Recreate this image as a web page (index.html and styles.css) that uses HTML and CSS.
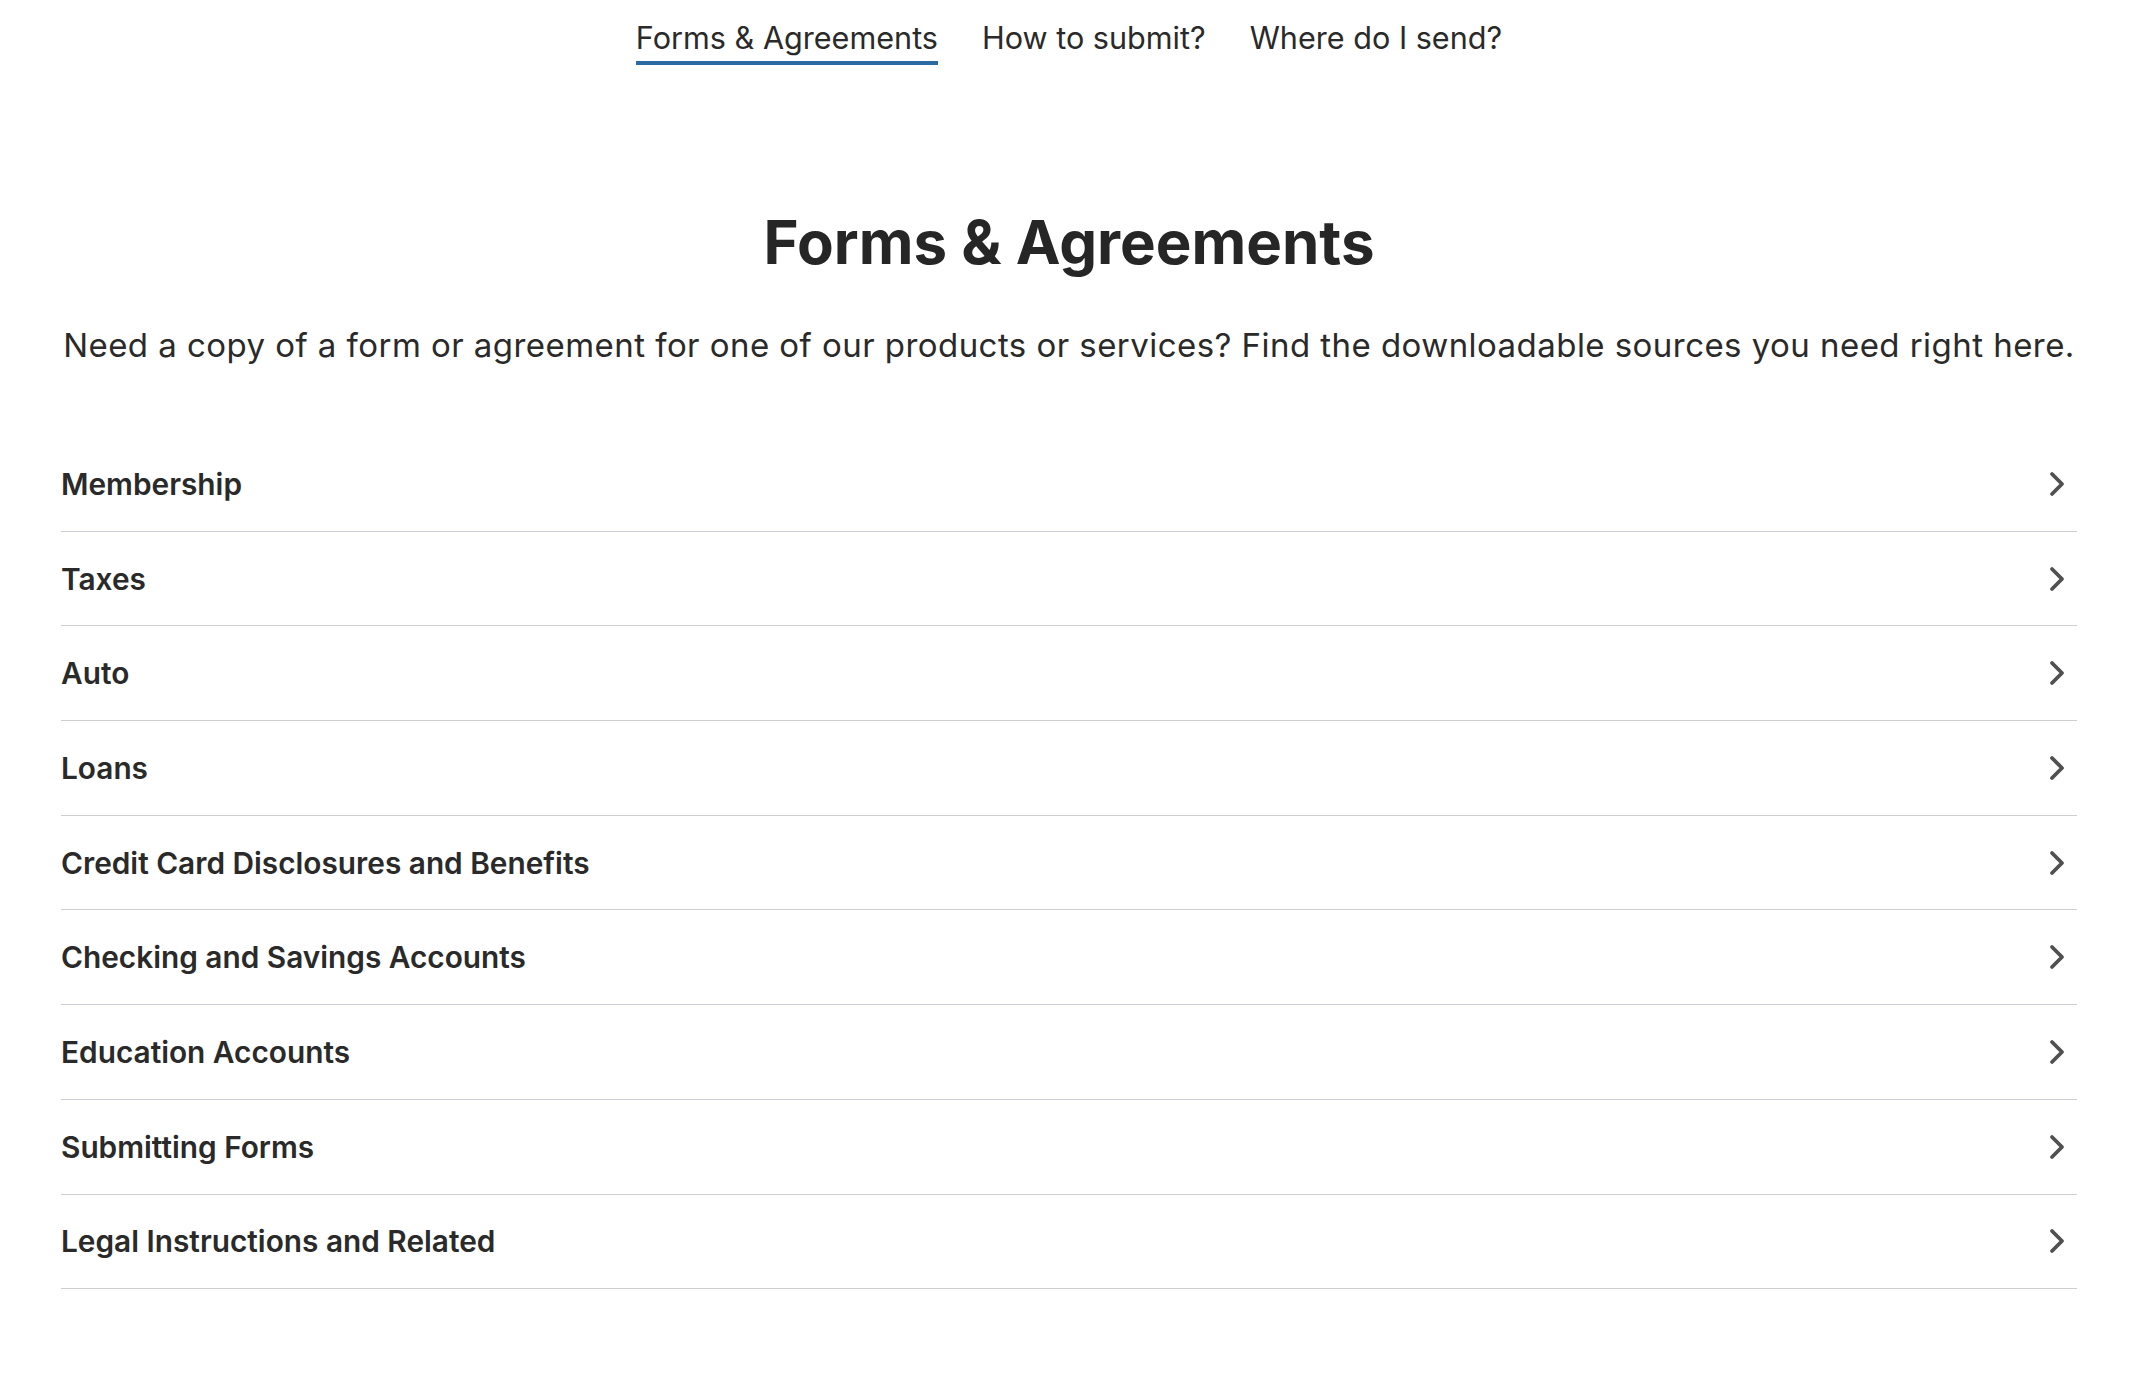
FILE: index.html
```html
<!DOCTYPE html>
<html lang="en">
<head>
<meta charset="utf-8">
<title>Forms &amp; Agreements</title>
<link rel="stylesheet" href="styles.css">
</head>
<body>
<div class="page">
  <nav class="tabs">
    <a class="tab active" href="#">Forms &amp; Agreements</a>
    <a class="tab" href="#">How to submit?</a>
    <a class="tab" href="#">Where do I send?</a>
  </nav>
  <h1 class="title">Forms &amp; Agreements</h1>
  <p class="intro">Need a copy of a form or agreement for one of our products or services? Find the downloadable sources you need right here.</p>
  <ul class="list">
    <li class="row"><span>Membership</span><svg class="chev" viewBox="0 0 16 26"><path d="M3 3 L13 13 L3 23"/></svg></li>
    <li class="row"><span>Taxes</span><svg class="chev" viewBox="0 0 16 26"><path d="M3 3 L13 13 L3 23"/></svg></li>
    <li class="row"><span>Auto</span><svg class="chev" viewBox="0 0 16 26"><path d="M3 3 L13 13 L3 23"/></svg></li>
    <li class="row"><span>Loans</span><svg class="chev" viewBox="0 0 16 26"><path d="M3 3 L13 13 L3 23"/></svg></li>
    <li class="row"><span>Credit Card Disclosures and Benefits</span><svg class="chev" viewBox="0 0 16 26"><path d="M3 3 L13 13 L3 23"/></svg></li>
    <li class="row"><span>Checking and Savings Accounts</span><svg class="chev" viewBox="0 0 16 26"><path d="M3 3 L13 13 L3 23"/></svg></li>
    <li class="row"><span>Education Accounts</span><svg class="chev" viewBox="0 0 16 26"><path d="M3 3 L13 13 L3 23"/></svg></li>
    <li class="row"><span>Submitting Forms</span><svg class="chev" viewBox="0 0 16 26"><path d="M3 3 L13 13 L3 23"/></svg></li>
    <li class="row"><span>Legal Instructions and Related</span><svg class="chev" viewBox="0 0 16 26"><path d="M3 3 L13 13 L3 23"/></svg></li>
  </ul>
</div>
</body>
</html>
```
FILE: styles.css
```css
* { box-sizing: border-box; }
html, body { margin: 0; padding: 0; background: #fff; }
body {
  font-family: Inter, "Noto Sans", "Liberation Sans", sans-serif;
  color: #2a2a2a;
}
.page {
  padding: 0 71px 0 61px;
}
.tabs {
  display: flex;
  justify-content: center;
  gap: 44px;
  padding-top: 20px;
}
.tab {
  font-size: 30.6px;
  line-height: 36px;
  color: #2a2a2a;
  text-decoration: none;
  padding-bottom: 5px;
  border-bottom: 4px solid transparent;
}
.tab.active {
  border-bottom-color: #2d6aa3;
}
.title {
  margin: 140px 0 0;
  text-align: center;
  font-size: 60px;
  line-height: 74px;
  font-weight: 700;
  color: #262626;
}
.intro {
  margin: 46px 0 0;
  text-align: center;
  font-size: 33px;
  line-height: 40px;
  letter-spacing: 0.45px;
  white-space: nowrap;
  font-weight: 400;
}
.list {
  list-style: none;
  margin: 72px 0 0;
  padding: 0;
}
.row {
  display: flex;
  justify-content: space-between;
  align-items: center;
  height: 94.7px;
  border-bottom: 1px solid #cfcfd3;
  font-size: 29.8px;
  font-weight: 600;
  padding-right: 12px;
}
.chev {
  width: 16px;
  height: 26px;
  fill: none;
  stroke: #505050;
  stroke-width: 3.8;
  stroke-linecap: round;
  stroke-linejoin: round;
}
```
